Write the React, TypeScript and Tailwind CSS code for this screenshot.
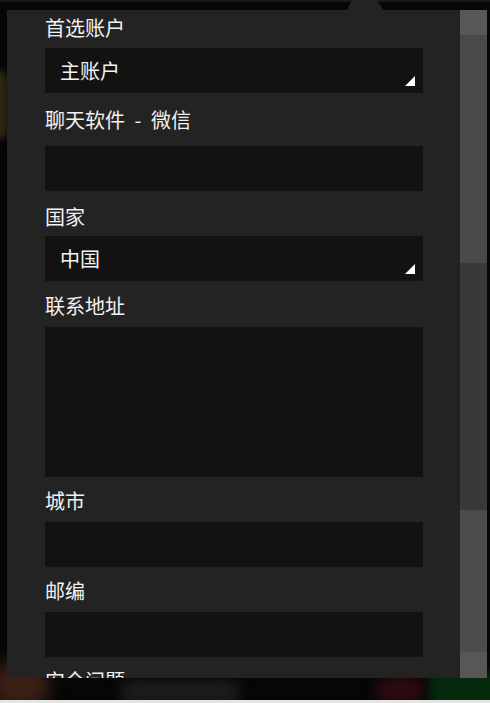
import React from 'react';

const font = { fontFamily: '"Noto Sans CJK SC", "Noto Sans", sans-serif' };

interface FieldProps {
  label: React.ReactNode;
  labelClass: string;
  boxClass: string;
  value?: string;
  select?: boolean;
  tall?: boolean;
}

const SelectArrow: React.FC = () => (
  <svg className="absolute right-[8px] bottom-[7px]" width="10" height="10" viewBox="0 0 10 10">
    <polygon points="10,0 10,10 0,10" fill="#ffffff" />
  </svg>
);

const Field: React.FC<FieldProps> = ({ label, labelClass, boxClass, value, select, tall }) => (
  <div>
    <div className={`h-[28px] text-[20px] leading-[28px] text-[#f2f2f2] whitespace-nowrap ${labelClass}`}>{label}</div>
    <div
      className={`relative w-[378px] bg-[#121212] ${tall ? 'h-[150px]' : 'h-[45px]'} ${boxClass} flex items-center pl-[15px]`}
    >
      {value && <span className="text-[20px] leading-[28px] text-[#f2f2f2]">{value}</span>}
      {select && <SelectArrow />}
    </div>
  </div>
);

const App: React.FC = () => {
  return (
    <div className="relative w-[490px] h-[703px] overflow-hidden bg-[#060606] flex flex-col" style={font}>
      {/* background page behind the popover */}
      <div className="absolute left-0 top-0 w-full h-[2px] bg-[#181818]" />
      <div className="absolute left-[-14px] top-[70px] w-[22px] h-[70px] rounded-full bg-[#2e2610] blur-[3px]" />
      <div className="absolute left-[-10px] top-[660px] w-[60px] h-[50px] rounded-full bg-[#3a1f14] blur-[8px]" />
      <div className="absolute left-[120px] top-[680px] w-[120px] h-[24px] rounded-full bg-[#1c1c1c] blur-[6px]" />
      <div className="absolute left-[375px] top-[675px] w-[50px] h-[30px] rounded-full bg-[#2a0a10] blur-[6px]" />
      <div className="absolute left-[430px] top-[672px] w-[80px] h-[34px] bg-[#062a0e] blur-[4px]" />

      {/* popover */}
      <div className="relative mt-[10px] ml-[7px] w-[480px] h-[668px] flex shrink-0">
        <svg className="absolute left-[340px] top-[-10px]" width="36" height="10" viewBox="0 0 36 10">
          <polygon points="5,0 30,0 36,10 0,10" fill="#232323" />
        </svg>
        <div className="w-[453px] h-full bg-[#232323] overflow-hidden pl-[38px]">
          <Field label="首选账户" labelClass="mt-[4px]" boxClass="mt-[6px]" value="主账户" select />
          <Field
            label={
              <>
                聊天软件<span className="px-[5px]"> - </span>微信
              </>
            }
            labelClass="mt-[13px]"
            boxClass="mt-[12px]"
          />
          <Field label="国家" labelClass="mt-[12px]" boxClass="mt-[5px]" value="中国" select />
          <Field label="联系地址" labelClass="mt-[11px]" boxClass="mt-[7px]" tall />
          <Field label="城市" labelClass="mt-[10px]" boxClass="mt-[7px]" />
          <Field label="邮编" labelClass="mt-[10px]" boxClass="mt-[7px]" />
          <Field label="安全问题" labelClass="mt-[10px]" boxClass="mt-[7px]" />
        </div>
        {/* scrollbar */}
        <div className="w-[27px] h-full flex flex-col">
          <div className="h-[25px] bg-[#585858]" />
          <div className="h-[228px] bg-[#4a4a4a]" />
          <div className="flex-1 bg-[#393939]" />
          <div className="h-[142px] bg-[#4c4c4c]" />
          <div className="h-[26px] bg-[#575757]" />
        </div>
      </div>

      <div className="flex-1" />
      <div className="relative h-[3px] bg-[#e4e4e4]" />
    </div>
  );
};

export default App;
